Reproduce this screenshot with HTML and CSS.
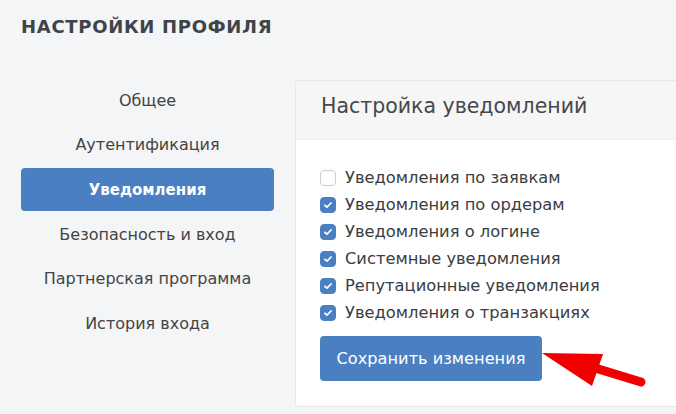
FILE: index.html
```html
<!DOCTYPE html>
<html lang="ru">
<head>
<meta charset="utf-8">
<link rel="stylesheet" href="styles.css">
</head>
<body>
<div class="page">
  <h1 class="title">НАСТРОЙКИ ПРОФИЛЯ</h1>
  <div class="layout">
    <nav class="sidebar">
      <a class="nav-item">Общее</a>
      <a class="nav-item">Аутентификация</a>
      <a class="nav-item active">Уведомления</a>
      <a class="nav-item">Безопасность и вход</a>
      <a class="nav-item">Партнерская программа</a>
      <a class="nav-item">История входа</a>
    </nav>
    <section class="card">
      <div class="card-header">Настройка уведомлений</div>
      <div class="card-body">
        <label class="check"><span class="box"></span>Уведомления по заявкам</label>
        <label class="check"><span class="box on"><svg viewBox="0 0 16 16"><path d="M4.5 8.3l2.3 2.2 4.7-4.8" /></svg></span>Уведомления по ордерам</label>
        <label class="check"><span class="box on"><svg viewBox="0 0 16 16"><path d="M4.5 8.3l2.3 2.2 4.7-4.8" /></svg></span>Уведомления о логине</label>
        <label class="check"><span class="box on"><svg viewBox="0 0 16 16"><path d="M4.5 8.3l2.3 2.2 4.7-4.8" /></svg></span>Системные уведомления</label>
        <label class="check"><span class="box on"><svg viewBox="0 0 16 16"><path d="M4.5 8.3l2.3 2.2 4.7-4.8" /></svg></span>Репутационные уведомления</label>
        <label class="check"><span class="box on"><svg viewBox="0 0 16 16"><path d="M4.5 8.3l2.3 2.2 4.7-4.8" /></svg></span>Уведомления о транзакциях</label>
        <div class="actions">
          <button class="save">Сохранить изменения</button>
          <svg class="arrow" viewBox="0 0 110 40" width="110" height="40">
            <path d="M53 15 L99 29" stroke="#f20000" stroke-width="9" stroke-linecap="round" fill="none"/>
            <polygon points="0,0 61,1 50,33" fill="#f20000"/>
          </svg>
        </div>
      </div>
    </section>
  </div>
</div>
</body>
</html>
```

FILE: styles.css
```css
* { box-sizing: border-box; }
html, body { margin: 0; padding: 0; }
body {
  background: #f4f5f7;
  font-family: "DejaVu Sans", "Noto Sans", sans-serif;
  color: #3c3f43;
  width: 676px;
  height: 414px;
  overflow: hidden;
}
.page { padding: 14px 0 0 21px; }
.title {
  margin: 0;
  font-size: 18px;
  font-weight: 600;
  color: #404448;
  letter-spacing: 0.7px;
  line-height: 26px;
}
.layout {
  display: flex;
  align-items: flex-start;
  gap: 21px;
  margin-top: 38px;
}
.sidebar {
  width: 253px;
  display: flex;
  flex-direction: column;
}
.nav-item {
  display: flex;
  align-items: center;
  justify-content: center;
  height: 44.6px;
  font-size: 16px;
  color: #444;
}
.nav-item.active {
  background: #4a7fc2;
  color: #fff;
  font-weight: 700;
  font-size: 15px;
  border-radius: 4px;
  height: 43px;
  margin: 0.8px 0;
  padding-top: 2px;
}
.card {
  flex: 1;
  margin-top: 2px;
  height: 327px;
  background: #fff;
  border: 1px solid #e6e8eb;
  border-right: none;
  border-radius: 4px 0 0 4px;
  overflow: hidden;
}
.card-header {
  background: #f6f6f6;
  height: 59px;
  padding: 13px 0 0 25px;
  font-size: 20.5px;
  color: #45484c;
  border-bottom: 1px solid #f0f0f0;
}
.card-body {
  padding: 24px 0 0 24px;
  display: flex;
  flex-direction: column;
}
.check {
  display: flex;
  align-items: center;
  height: 27px;
  font-size: 16.3px;
  color: #3a3d41;
}
.box {
  width: 16px;
  height: 16px;
  border: 1px solid #c9ccd0;
  border-radius: 4px;
  margin-right: 9px;
  background: #fff;
  flex: none;
}
.box.on {
  background: #4a7fc2;
  border-color: #4a7fc2;
}
.box svg {
  display: block;
  width: 14px;
  height: 14px;
  fill: none;
  stroke: #fff;
  stroke-width: 2;
  stroke-linecap: round;
  stroke-linejoin: round;
}
.actions {
  display: flex;
  align-items: flex-start;
  margin-top: 10px;
}
.save {
  width: 222px;
  height: 45px;
  background: #4a7fc2;
  color: #fff;
  border: none;
  border-radius: 4px;
  font-family: inherit;
  font-size: 16.2px;
  padding: 0;
}
.arrow {
  margin-left: 0;
  margin-top: 17px;
}
```
